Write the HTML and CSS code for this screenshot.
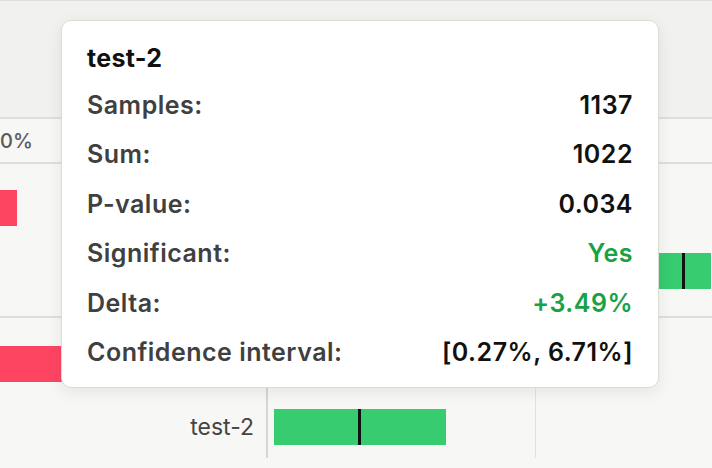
FILE: index.html
```html
<!DOCTYPE html>
<html lang="en">
<head>
  <meta charset="UTF-8">
  <title>Experiment results</title>
  <link rel="stylesheet" href="styles.css">
</head>
<body>

<div class="chart">
  <div class="top"></div>
  <div class="axis"><span class="tick">0%</span></div>

  <div class="group">
    <div class="lane">
      <div class="cell"><div class="bar red" style="width:17px"></div></div>
      <div class="cell mid"></div>
      <div class="cell end"></div>
    </div>
    <div class="lane">
      <div class="cell"></div>
      <div class="cell mid"></div>
      <div class="cell end">
        <div class="bar green" style="margin-left:124px; width:52px">
          <i class="mark" style="left:23px"></i>
        </div>
      </div>
    </div>
  </div>

  <div class="group second">
    <div class="lane">
      <div class="cell"><div class="bar red" style="width:140px"></div></div>
      <div class="cell mid lined"></div>
      <div class="cell end lined"></div>
    </div>
    <div class="lane">
      <div class="cell label">test-2</div>
      <div class="cell mid lined">
        <div class="bar green" style="margin-left:6px; width:172px">
          <i class="mark" style="left:84px"></i>
        </div>
      </div>
      <div class="cell end lined"></div>
    </div>
  </div>
</div>

<div class="tooltip">
  <div class="tip-title">test-2</div>
  <div class="tip-row"><span>Samples:</span><b>1137</b></div>
  <div class="tip-row"><span>Sum:</span><b>1022</b></div>
  <div class="tip-row"><span>P-value:</span><b>0.034</b></div>
  <div class="tip-row"><span>Significant:</span><b class="good">Yes</b></div>
  <div class="tip-row"><span>Delta:</span><b class="good">+3.49%</b></div>
  <div class="tip-row"><span>Confidence interval:</span><b>[0.27%, 6.71%]</b></div>
</div>

</body>
</html>
```

FILE: styles.css
```css
:root {
  --line: #dde1d8;
  --red: #fd4562;
  --green: #37cc70;
  --ok: #18a244;
}

body {
  margin: 0;
  background: #f7f7f5;
  font-family: Inter, "Noto Sans", sans-serif;
  color: #333;
  overflow: hidden;
}

.chart {
  width: 712px;
}

.top {
  height: 116px;
  background: #f1f1ef;
  border-top: 1px solid var(--line);
  border-bottom: 2px solid var(--line);
}

.axis {
  height: 43px;
  display: flex;
  align-items: center;
  border-bottom: 2px solid var(--line);
}

.tick {
  font-size: 20px;
  font-weight: 500;
  color: #5a5a5a;
}

.group {
  height: 125px;
  padding: 13px 0 14px;
  border-bottom: 2px solid var(--line);
}

.group.second {
  padding-top: 15px;
  border-bottom: none;
  height: 140px;
}

.lane {
  display: grid;
  grid-template-columns: 266px 269px 1fr;
  height: 62.5px;
}

.cell {
  display: flex;
  align-items: center;
}

.mid.lined {
  border-left: 2px solid #d6d6d4;
}

.end.lined {
  border-left: 1px solid #e2e2e0;
}

.label {
  justify-content: flex-end;
  padding-right: 12px;
  font-size: 23px;
  color: #444;
}

.bar {
  position: relative;
  height: 36px;
  flex-shrink: 0;
}

.bar.red {
  background: var(--red);
}

.bar.green {
  background: var(--green);
}

.mark {
  position: absolute;
  top: 0;
  bottom: 0;
  width: 3px;
  background: #111;
}

.tooltip {
  position: absolute;
  left: 61px;
  top: 20px;
  width: 546px;
  padding: 24px 25px 22px;
  background: #fff;
  border: 1px solid #d9ddd3;
  border-radius: 10px;
  box-shadow: 0 4px 16px rgba(0, 0, 0, 0.08);
}

.tip-title {
  font-size: 25px;
  line-height: 26px;
  font-weight: 700;
  color: #111;
  margin-bottom: 21px;
  letter-spacing: 0.3px;
}

.tip-row {
  display: flex;
  justify-content: space-between;
  font-size: 25px;
  line-height: 26px;
  font-weight: 600;
  letter-spacing: 0.5px;
}

.tip-row + .tip-row {
  margin-top: 23.4px;
}

.tip-row span {
  color: #404040;
}

.tip-row b {
  font-weight: 600;
  color: #111;
}

.tip-row b.good {
  color: var(--ok);
}
```
